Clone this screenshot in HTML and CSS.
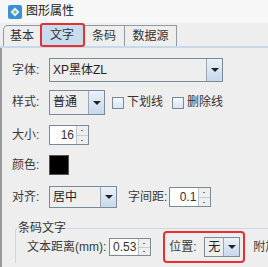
FILE: index.html
```html
<!DOCTYPE html>
<html lang="zh-CN">
<head>
    <meta charset="UTF-8">
    <title>图形属性</title>
    <link rel="stylesheet" href="styles.css">
</head>
<body>
    <div class="window">
        <div class="titlebar">
            <svg class="app-icon" width="14" height="14" viewBox="0 0 14 14">
                <rect x="0" y="0" width="14" height="14" rx="2" fill="#3d8fd8"></rect>
                <path d="M7 2.5 L11.5 7 L7 11.5 L2.5 7 Z" fill="#e8f4ff"></path>
                <path d="M7 5 L9 7 L7 9 L5 7 Z" fill="#7cc06a"></path>
            </svg>
            <span class="title">图形属性</span>
        </div>

        <div class="tabs">
            <div class="tab tab-first">基本</div>
            <div class="tab tab-active">文字</div>
            <div class="tab">条码</div>
            <div class="tab">数据源</div>
        </div>

        <div class="panel">
            <div class="row row-font">
                <span class="label">字体:</span>
                <div class="combo combo-font">
                    <span class="combo-text">XP黑体ZL</span>
                    <span class="combo-arrow"></span>
                </div>
            </div>

            <div class="row row-style">
                <span class="label">样式:</span>
                <div class="combo combo-style">
                    <span class="combo-text">普通</span>
                    <span class="combo-arrow"></span>
                </div>
                <label class="check"><span class="box"></span>下划线</label>
                <label class="check"><span class="box"></span>删除线</label>
            </div>

            <div class="row row-size">
                <span class="label">大小:</span>
                <div class="spinner spinner-size">
                    <span class="spin-text">16</span>
                    <span class="spin-btns"><span class="up"></span><span class="down"></span></span>
                </div>
            </div>

            <div class="row row-color">
                <span class="label">颜色:</span>
                <span class="swatch"></span>
            </div>

            <div class="row row-align">
                <span class="label">对齐:</span>
                <div class="combo combo-align">
                    <span class="combo-text">居中</span>
                    <span class="combo-arrow"></span>
                </div>
                <span class="label-inline">字间距:</span>
                <div class="spinner spinner-gap">
                    <span class="spin-text">0.1</span>
                    <span class="spin-btns"><span class="up"></span><span class="down"></span></span>
                </div>
            </div>

            <fieldset class="group">
                <legend>条码文字</legend>
                <div class="row row-dist">
                    <span class="label-inline">文本距离(mm):</span>
                    <div class="spinner spinner-dist">
                        <span class="spin-text">0.53</span>
                        <span class="spin-btns"><span class="up"></span><span class="down"></span></span>
                    </div>
                    <div class="highlight">
                        <span class="label-inline">位置:</span>
                        <div class="combo combo-pos">
                            <span class="combo-text">无</span>
                            <span class="combo-arrow"></span>
                        </div>
                    </div>
                    <span class="label-inline extra">附加</span>
                </div>
            </fieldset>
        </div>
    </div>
</body>
</html>
```

FILE: styles.css
```css
/* 图形属性对话框 */
html, body {
    margin: 0;
    padding: 0;
    width: 268px;
    height: 267px;
    overflow: hidden;
    background: #eeeeee;
}

body {
    font-family: "Liberation Sans", "Noto Sans CJK SC", sans-serif;
    font-size: 12px;
    line-height: 15px;
    color: #3a3a3a;
}

.window {
    width: 268px;
}

.titlebar {
    height: 23px;
    background: #f7f7f7;
    display: flex;
    align-items: center;
    padding-left: 8px;
}

.app-icon {
    margin-right: 4px;
}

.title {
    font-size: 12px;
    color: #222;
}

/* 标签页 */
.tabs {
    display: flex;
    align-items: flex-end;
    height: 23px;
    padding-left: 3px;
    border-bottom: 2px solid #c6d8ea;
}

.tab {
    height: 21px;
    line-height: 21px;
    padding: 0;
    white-space: nowrap;
    font-size: 12px;
    color: #333;
    background: #eeeeee;
    border: 1px solid #8e9aa6;
    border-bottom: none;
    border-left: none;
    box-sizing: border-box;
    width: 41px;
    text-align: center;
}

.tab-first {
    border-left: 1px solid #8e9aa6;
    border-top-left-radius: 5px;
    width: 38px;
}

.tab-active {
    background: #c8dcef;
    height: 22px;
    width: 43px;
    outline: 2px solid #e8302e;
    outline-offset: -1px;
    border-radius: 2px;
    position: relative;
}

.tab:last-child {
    width: 52px;
}

/* 内容面板 */
.panel {
    border-left: 2px solid #9a9a9a;
    height: 220px;
    padding-left: 10px;
}

.row {
    display: flex;
    align-items: center;
}

.label {
    width: 37px;
    flex: none;
}

.label-inline {
    flex: none;
    white-space: nowrap;
}

.row-font {
    padding-top: 10px;
    height: 24px;
}

.row-style {
    margin-top: 8px;
    height: 25px;
}

.row-size {
    margin-top: 10px;
    height: 20px;
}

.row-color {
    margin-top: 10px;
    height: 20px;
}

.row-align {
    margin-top: 11px;
    height: 22px;
}

/* 下拉框 */
.combo {
    display: flex;
    height: 100%;
    box-sizing: border-box;
    border: 1px solid #7a8a99;
    background: #eeeeee;
}

.combo-text {
    flex: 1;
    padding-left: 3px;
    display: flex;
    align-items: center;
    color: #222;
}

.combo-arrow {
    width: 15px;
    flex: none;
    border-left: 1px solid #9aa8b6;
    background: linear-gradient(#eaf1f8, #c6d8ea);
    position: relative;
}

.combo-arrow::after {
    content: "";
    position: absolute;
    left: 4px;
    top: 50%;
    margin-top: -2px;
    border-left: 4px solid transparent;
    border-right: 4px solid transparent;
    border-top: 4px solid #222;
}

.combo-font {
    width: 174px;
}

.combo-style {
    width: 56px;
}

.combo-align {
    width: 68px;
}

.combo-pos {
    width: 36px;
    height: 20px;
}

/* 复选框 */
.check {
    display: flex;
    align-items: center;
    margin-left: 7px;
    color: #333;
}

.check + .check {
    margin-left: 9px;
}

.box {
    width: 10px;
    height: 10px;
    border: 1px solid #7a8a99;
    background: linear-gradient(#f4f8fb, #d8e4ef);
    margin-right: 3px;
}

/* 数字输入 */
.spinner {
    display: flex;
    height: 100%;
    box-sizing: border-box;
    border: 1px solid #7a8a99;
    background: #ffffff;
}

.spin-text {
    flex: 1;
    padding-right: 2px;
    display: flex;
    align-items: center;
    justify-content: flex-end;
    color: #333;
}

.spin-btns {
    width: 11px;
    flex: none;
    display: flex;
    flex-direction: column;
    border-left: 1px solid #b8c4cf;
    background: #eeeeee;
}

.spin-btns span {
    flex: 1;
    position: relative;
}

.spin-btns .up {
    border-bottom: 1px solid #c4ccd4;
}

.spin-btns span::after {
    content: "";
    position: absolute;
    left: 4px;
    top: 50%;
    width: 2px;
    height: 1px;
    background: #777;
}

.spinner-size {
    width: 40px;
}

.spinner-gap {
    width: 42px;
    height: 20px;
    margin-left: 2px;
}

.spinner-dist {
    width: 42px;
    height: 18px;
    margin-left: 3px;
}

.row-align .label-inline {
    margin-left: 11px;
}

.swatch {
    width: 20px;
    height: 20px;
    box-sizing: border-box;
    background: #000000;
    border: 1px solid #555;
}

/* 分组框 */
.group {
    margin: 13px 0 0 3px;
    padding: 0;
    border: none;
    border-top: 1px solid #c6d8ea;
    border-left: 1px solid #c6d8ea;
    border-top-left-radius: 3px;
    min-width: 0;
    width: 300px;
}

.group legend {
    padding: 0 1px;
    margin-left: 1px;
    line-height: 14px;
    color: #333;
}

.row-dist {
    height: 32px;
    margin-top: -4px;
    padding-left: 11px;
}

.highlight {
    display: flex;
    align-items: center;
    height: 32px;
    box-sizing: border-box;
    border: 2px solid #e8302e;
    border-radius: 4px;
    margin-left: 12px;
    padding: 0 3px 0 4px;
}

.highlight .label-inline {
    width: 35px;
}

.extra {
    margin-left: 8px;
}
```
